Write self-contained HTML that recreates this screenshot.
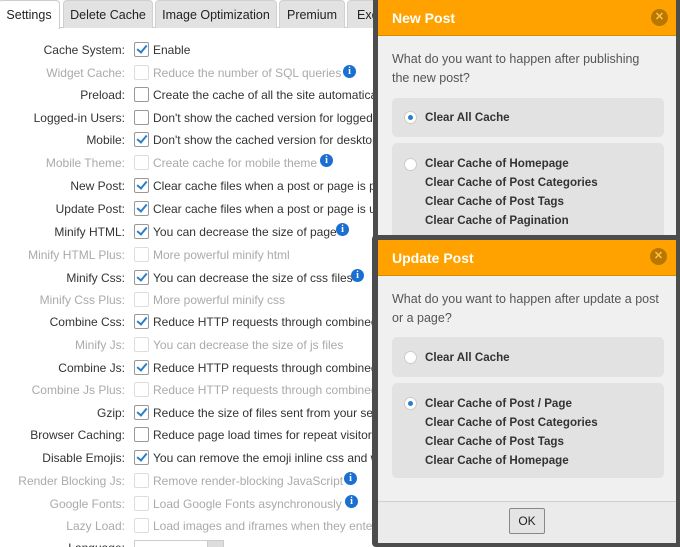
<!DOCTYPE html>
<html style="overflow:hidden;height:547px"><head><style>
*{margin:0;padding:0;box-sizing:border-box}
body{width:680px;height:547px;overflow:hidden;background:#fff;font-family:"Liberation Sans",sans-serif;font-size:12px;color:#333;position:relative}
.tab{position:absolute;top:0;height:28px;background:#e2e2e2;border:1px solid #d0d0d0;border-bottom:none;border-radius:4px 4px 0 0;font-size:12.5px;line-height:28px;text-align:center;color:#222}
.row{position:absolute;left:0;width:380px;height:20px}
.lb{position:absolute;right:255px;top:2px;white-space:nowrap;color:#333}
.cb{position:absolute;left:134px;top:1px;width:15px;height:15px;border:1px solid #999;background:#fff;border-radius:2px}
.tx{position:absolute;left:153px;top:2px;white-space:nowrap;color:#333}
.dis .lb,.dis .tx{color:#aaa}
.dis .cb{border-color:#ddd}
.ck::after{content:"";position:absolute;left:4px;top:0px;width:4px;height:8px;border:solid #2a7fc9;border-width:0 2px 2px 0;transform:rotate(40deg)}
.info{position:absolute;width:13px;height:13px;border-radius:50%;background:#1a6fd0;color:#fff;font:bold 10px "Liberation Serif",serif;text-align:center;line-height:13px}
.dlg{position:absolute;background:#4c4c4c}
.hd{position:absolute;background:#ffa200;color:#fff;font:bold 14px "Liberation Sans",sans-serif;padding-left:14px;border-bottom:1px solid #d88a00}
.x{position:absolute;width:17px;height:17px;border-radius:50%;background:#b87800;color:#ffc04a;font:bold 11px sans-serif;text-align:center;line-height:17px}
.bd{position:absolute;background:#f0f0f0}
.q{position:absolute;left:14px;color:#555;font-size:12.5px;line-height:19px;width:268px}
.opt{position:absolute;left:14px;width:272px;background:#e2e2e2;border-radius:5px}
.opt p{font-weight:bold;color:#333;font-size:11.6px;line-height:19px;padding-left:33px}
.rd{position:absolute;left:12px;width:13px;height:13px;border-radius:50%;background:#fff;border:1px solid #ccc}
.rd.on::after{content:"";position:absolute;left:3px;top:3px;width:5px;height:5px;border-radius:50%;background:#2a7fc9}
</style></head><body>
<div style="position:absolute;left:0;top:27px;width:380px;border-top:1px solid #ccc"></div>
<div class="tab" style="left:-2px;width:62px;background:#fff;border-color:#ccc;height:29px">Settings</div>
<div class="tab" style="left:63px;width:90px">Delete Cache</div>
<div class="tab" style="left:155px;width:122px">Image Optimization</div>
<div class="tab" style="left:279px;width:66px">Premium</div>
<div class="tab" style="left:347px;width:60px;text-align:left;padding-left:9px">Exclude</div>

<div class="row" style="top:41px"><span class="lb">Cache System:</span><span class="cb ck"></span><span class="tx">Enable</span></div>
<div class="row dis" style="top:64px"><span class="lb">Widget Cache:</span><span class="cb"></span><span class="tx">Reduce the number of SQL queries</span><span class="info" style="left:343px;top:1px">i</span></div>
<div class="row" style="top:86px"><span class="lb">Preload:</span><span class="cb"></span><span class="tx">Create the cache of all the site automatically</span></div>
<div class="row" style="top:109px"><span class="lb">Logged-in Users:</span><span class="cb"></span><span class="tx">Don't show the cached version for logged-in users</span></div>
<div class="row" style="top:131px"><span class="lb">Mobile:</span><span class="cb ck"></span><span class="tx">Don't show the cached version for desktop</span></div>
<div class="row dis" style="top:154px"><span class="lb">Mobile Theme:</span><span class="cb"></span><span class="tx">Create cache for mobile theme</span><span class="info" style="left:320px;top:0px">i</span></div>
<div class="row" style="top:177px"><span class="lb">New Post:</span><span class="cb ck"></span><span class="tx">Clear cache files when a post or page is published</span></div>
<div class="row" style="top:200px"><span class="lb">Update Post:</span><span class="cb ck"></span><span class="tx">Clear cache files when a post or page is updated</span></div>
<div class="row" style="top:223px"><span class="lb">Minify HTML:</span><span class="cb ck"></span><span class="tx">You can decrease the size of page</span><span class="info" style="left:336px;top:0px">i</span></div>
<div class="row dis" style="top:246px"><span class="lb">Minify HTML Plus:</span><span class="cb"></span><span class="tx">More powerful minify html</span></div>
<div class="row" style="top:269px"><span class="lb">Minify Css:</span><span class="cb ck"></span><span class="tx">You can decrease the size of css files</span><span class="info" style="left:351px;top:0px">i</span></div>
<div class="row dis" style="top:291px"><span class="lb">Minify Css Plus:</span><span class="cb"></span><span class="tx">More powerful minify css</span></div>
<div class="row" style="top:313px"><span class="lb">Combine Css:</span><span class="cb ck"></span><span class="tx">Reduce HTTP requests through combined css files</span></div>
<div class="row dis" style="top:336px"><span class="lb">Minify Js:</span><span class="cb"></span><span class="tx">You can decrease the size of js files</span></div>
<div class="row" style="top:359px"><span class="lb">Combine Js:</span><span class="cb ck"></span><span class="tx">Reduce HTTP requests through combined js files</span></div>
<div class="row dis" style="top:381px"><span class="lb">Combine Js Plus:</span><span class="cb"></span><span class="tx">Reduce HTTP requests through combined js files</span></div>
<div class="row" style="top:404px"><span class="lb">Gzip:</span><span class="cb ck"></span><span class="tx">Reduce the size of files sent from your server</span></div>
<div class="row" style="top:426px"><span class="lb">Browser Caching:</span><span class="cb"></span><span class="tx">Reduce page load times for repeat visitors</span></div>
<div class="row" style="top:449px"><span class="lb">Disable Emojis:</span><span class="cb ck"></span><span class="tx">You can remove the emoji inline css and wp-emoji</span></div>
<div class="row dis" style="top:472px"><span class="lb">Render Blocking Js:</span><span class="cb"></span><span class="tx">Remove render-blocking JavaScript</span><span class="info" style="left:344px;top:0px">i</span></div>
<div class="row dis" style="top:495px"><span class="lb">Google Fonts:</span><span class="cb"></span><span class="tx">Load Google Fonts asynchronously</span><span class="info" style="left:345px;top:0px">i</span></div>
<div class="row dis" style="top:517px"><span class="lb">Lazy Load:</span><span class="cb"></span><span class="tx">Load images and iframes when they enter the browser</span></div>
<div class="row" style="top:539px"><span class="lb">Language:</span><span style="position:absolute;left:134px;top:1px;width:90px;height:20px;border:1px solid #ccc"></span><span style="position:absolute;left:207px;top:1px;width:17px;height:20px;background:#ddd;border:1px solid #ccc"></span></div>

<div class="dlg" style="left:373px;top:0;width:307px;height:300px">
  <div class="hd" style="left:5px;top:0;width:298px;height:36px;line-height:36px">New Post</div>
  <div class="x" style="left:278px;top:9px">✕</div>
  <div class="bd" style="left:5px;top:36px;width:298px;height:264px">
    <div class="q" style="top:14px">What do you want to happen after publishing the new post?</div>
    <div class="opt" style="top:62px;height:39px"><span class="rd on" style="top:13px"></span><p style="padding-top:10px">Clear All Cache</p></div>
    <div class="opt" style="top:107px;height:160px"><span class="rd" style="top:15px"></span><p style="padding-top:11px">Clear Cache of Homepage<br>Clear Cache of Post Categories<br>Clear Cache of Post Tags<br>Clear Cache of Pagination</p></div>
  </div>
</div>

<div class="dlg" style="left:372px;top:235px;width:308px;height:312px;border-radius:4px 0 0 4px">
  <div class="hd" style="left:6px;top:5px;width:298px;height:36px;line-height:36px">Update Post</div>
  <div class="x" style="left:278px;top:13px">✕</div>
  <div class="bd" style="left:6px;top:41px;width:298px;height:267px">
    <div class="q" style="top:14px">What do you want to happen after update a post or a page?</div>
    <div class="opt" style="top:61px;height:40px"><span class="rd" style="top:14px"></span><p style="padding-top:11px">Clear All Cache</p></div>
    <div class="opt" style="top:107px;height:95px"><span class="rd on" style="top:14px"></span><p style="padding-top:11px">Clear Cache of Post / Page<br>Clear Cache of Post Categories<br>Clear Cache of Post Tags<br>Clear Cache of Homepage</p></div>
    <div style="position:absolute;left:0;top:225px;width:298px;border-top:1px solid #d0d0d0;height:42px;background:#ebebeb"></div>
    <div style="position:absolute;left:131px;top:232px;width:36px;height:26px;border:1px solid #888;background:#e4e4e4;border-radius:2px;text-align:center;line-height:24px;font-size:12px;color:#222">OK</div>
  </div>
</div>
</body></html>
